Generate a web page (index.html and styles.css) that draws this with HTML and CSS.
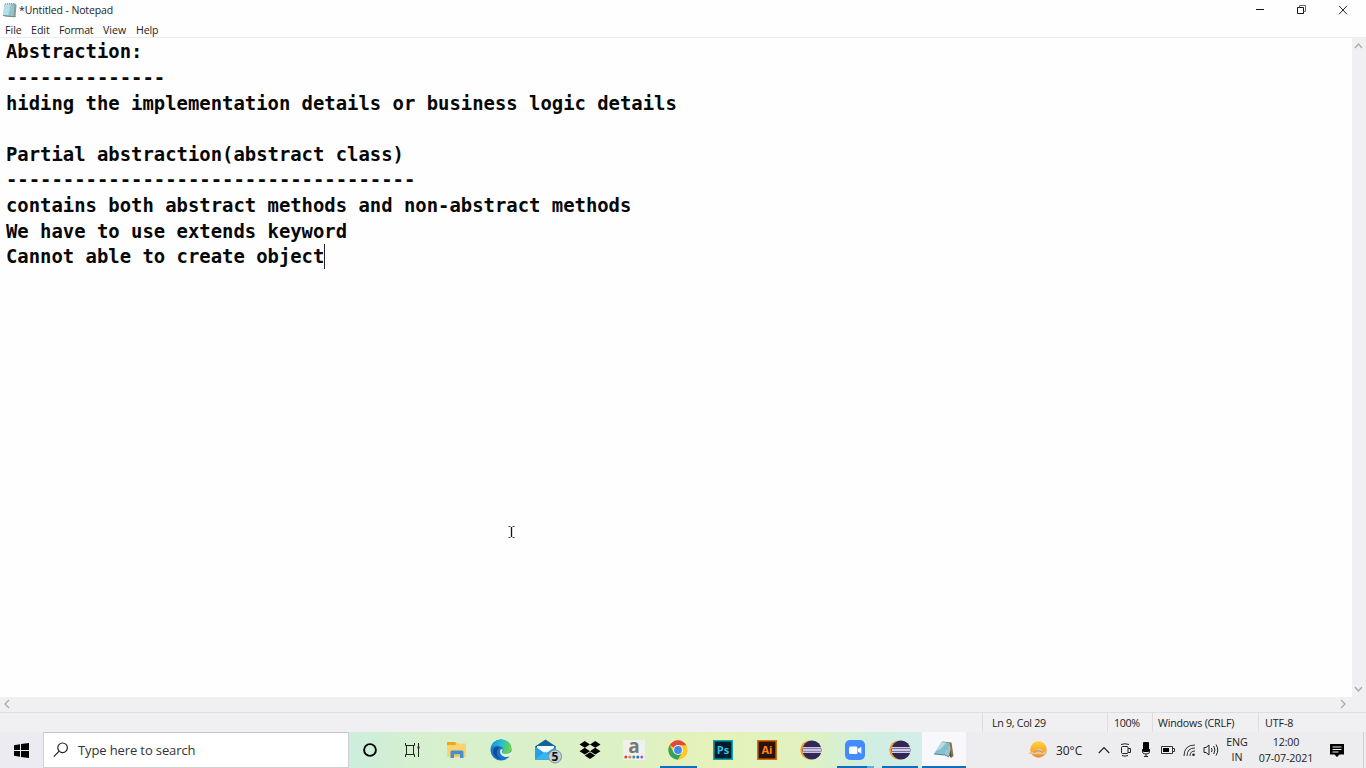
FILE: index.html
```html
<!DOCTYPE html>
<html lang="en">
<head>
<meta charset="utf-8">
<title>*Untitled - Notepad</title>
<link rel="stylesheet" href="styles.css">
</head>
<body>
<div class="screen">
  <header class="titlebar">
    <svg class="app-icon" width="16" height="16" viewBox="0 0 16 16"><path d="M3 2 13 1.500 14.500 3 13.500 15 3 14.500z" fill="#8a9a93"/><path d="M2.500 2 12.500 2 11.500 14.500 1 13.500z" fill="#8fc5d2"/><path d="M3 2 9 2 6 13.500 1 13.300z" fill="#b5dee8"/><path d="M3 1.800 13 1.800" stroke="#64858d" stroke-dasharray="1 1"/><path d="M1 13.500 11.500 14.700 13.500 14.500" stroke="#718a87" fill="none"/></svg>
    <span class="title">*Untitled - Notepad</span>
    <div class="controls">
      <svg width="42" height="20" viewBox="0 0 42 20"><path d="M16 9.500h8" stroke="#111"/></svg>
      <svg width="42" height="20" viewBox="0 0 42 20" fill="none" stroke="#111"><path d="M15.500 7.500h6v6h-6z"/><path d="M17.500 7.500v-2h6v6h-2" stroke="#666"/></svg>
      <svg width="42" height="20" viewBox="0 0 42 20"><path d="m15 5.800 8 8.500m0-8.500-8 8.500" stroke="#222" fill="none"/></svg>
    </div>
  </header>
  <nav class="menu"><span class="m-file">File</span><span class="m-edit">Edit</span><span class="m-format">Format</span><span class="m-view">View</span><span class="m-help">Help</span></nav>
  <main class="editor">
<pre class="document">Abstraction:
--------------
hiding the implementation details or business logic details

Partial abstraction(abstract class)
------------------------------------
contains both abstract methods and non-abstract methods
We have to use extends keyword
Cannot able to create object<i class="caret"></i></pre>
    <div class="vscroll">
      <svg width="14" height="14" viewBox="0 0 14 14"><path d="m3 10 3.500-4 3.500 4"/></svg>
      <svg width="14" height="14" viewBox="0 0 14 14"><path d="m3 4 3.500 4 3.500-4"/></svg>
    </div>
    <svg class="pointer" width="9" height="14" viewBox="0 0 9 14" fill="none"><path d="M1.500 1.500h2m2 0h2m-6 11h2m2 0h2" stroke="#444"/><path d="M4.500 2v10" stroke="#111" stroke-width="1.300"/></svg>
  </main>
  <div class="hscroll">
    <svg width="14" height="14" viewBox="0 0 14 14"><path d="M9 3 5 7l4 4"/></svg>
    <svg width="14" height="14" viewBox="0 0 14 14"><path d="m4 3 4 4-4 4"/></svg>
  </div>
  <footer class="status"><span></span><span class="pos">Ln 9, Col 29</span><span class="pct">100%</span><span class="eol">Windows (CRLF)</span><span class="enc">UTF-8</span></footer>

  <div class="taskbar">
    <div class="start"><svg width="16" height="15" viewBox="0 0 16 15"><path d="M0 2.200 6 1.300V7H0zM7 1.100 15 0v7H7zM0 8h6v5.700L0 12.800zM7 8h8v7l-8-1.100z" fill="#000"/></svg></div>
    <div class="search"><svg width="16" height="16" viewBox="0 0 16 16" fill="none" stroke="#222" stroke-width="1.200"><circle cx="9.600" cy="5.800" r="4.800"/><path d="m6.200 9.200-5.400 5.500"/></svg><span>Type here to search</span></div>
    <div class="apps">
      <div class="app"><svg width="16" height="16" viewBox="0 0 16 16"><circle cx="8" cy="8" r="5.900" fill="none" stroke="#000" stroke-width="1.900"/></svg></div>
      <div class="app"><svg width="18" height="16" viewBox="0 0 18 16" fill="none" stroke="#222"><path d="M1.500 1v2.500h9V1M1.500 15v-2.500h9V15M2.500 3.500v9M9.500 3.500v9M14.500 1v14"/><path d="M13.500 4.500h2v2h-2z" fill="#222" stroke="none"/></svg></div>
      <div class="app"><svg width="20" height="18" viewBox="0 0 20 18"><path d="M0 1h8l2 2h8q1 0 1 1v12H0z" fill="#e8a91e"/><path d="M0 4h8l2-1.500h9V16H0z" fill="#ffd36c"/><path d="M3.500 17v-6q0-1.500 1.500-1.500h10q1.500 0 1.500 1.500v6H13v-3.500H7V17z" fill="#4290cf"/><path d="M7 13.500h6V16H7z" fill="#f7c954"/></svg></div>
      <div class="app"><svg width="22" height="22" viewBox="0 0 22 22"><defs><linearGradient id="edge" x1="0" y1="0" x2="1" y2=".3"><stop stop-color="#168ddb"/><stop offset=".55" stop-color="#25bfd0"/><stop offset="1" stop-color="#6bd34d"/></linearGradient></defs><circle cx="11" cy="11" r="10.500" fill="#1675c9"/><path d="M.6 10C1 4.500 5.300.5 11 .5c6 0 10.500 4 10.500 8.600 0 3.600-2.600 5.900-6 5.900-2.400 0-3.300-1-2.700-2 .8-1.300.8-3.300-.7-4.700C8.700 5.500 2.800 6.500.6 10z" fill="url(#edge)"/><path d="M9.500 8.800c-4.500 3-3 9.800 2.500 11.800-5.800-.2-9.300-4.800-8.700-9 .5-3.300 3.600-4.600 6.200-2.800z" fill="#17499b"/><path d="M12.800 10.500c.2 1.100-.8 1.600-.7 2.700.2 1.500 2.900 2.100 5.300 1.500 1.500-.4 3-1.200 4.100-2.200l1.500 1-3 3.500c-3.500 2.300-9.300.4-9.900-3.800-.3-2.200 1-4.400 2.700-2.700z" fill="#e6f3da"/></svg></div>
      <div class="app"><svg width="32" height="28" viewBox="0 0 32 28"><path d="m5 10.500 10.500-7L26 10.500v13H5z" fill="#14629c"/><path d="M7 10h17v8H7z" fill="#f5faff"/><path d="m5 10.500 10.500 7 10.500-7v13H5z" fill="#289fe4"/><path d="m5 23.500 10.500-8 7 8z" fill="#36b5f0"/><circle cx="25" cy="20.500" r="6.500" fill="#c2d2d5" stroke="#7c9297"/><text class="badge" x="25" y="24.800" text-anchor="middle">5</text></svg></div>
      <div class="app"><svg width="22" height="20" viewBox="0 0 22 20"><path d="m5.800 1 5.200 3.400-5.200 3.400L.5 4.400zm10.400 0 5.300 3.400-5.300 3.400L11 4.400zM5.800 7.800l5.200 3.400-5.200 3.300-5.300-3.300zm10.400 0 5.300 3.400-5.300 3.300-5.200-3.300zM5.800 15.600l5.200-3.300 5.200 3.300L11 19z"/></svg></div>
      <div class="app"><svg class="shop" width="22" height="22" viewBox="0 0 22 22"><path d="M0 1h22v20H0z" fill="#eff1ed"/><text class="letter-a" x="11" y="14" text-anchor="middle">a</text><g><circle cx="2.800" cy="18" r="1.500" fill="#d6472d"/><circle cx="6.800" cy="18" r="1.500" fill="#ef7842"/><circle cx="10.800" cy="18" r="1.500" fill="#21a083"/><circle cx="14.800" cy="18" r="1.500" fill="#3c60d8"/><circle cx="18.800" cy="18" r="1.500" fill="#a554ca"/></g></svg></div>
      <div class="app run"><svg width="20" height="20" viewBox="0 0 20 20"><circle cx="10" cy="10" r="9.700" fill="#ffca28"/><path d="M10 10 1.600 5.200A9.700 9.700 0 0 1 18.400 5.200H10z" fill="#e5483b"/><path d="M1.600 5.200A9.700 9.700 0 0 0 9.800 19.700L14 12.500l-8.200-.1z" fill="#30a45b"/><circle cx="10" cy="10" r="4.900" fill="#f4f7ec"/><circle cx="10" cy="10" r="3.900" fill="#4388ef"/></svg></div>
      <div class="app"><svg width="20" height="20" viewBox="0 0 20 20"><path d="M.8.800h18.400v18.400H.8z" fill="#001d2b" stroke="#13a5b5" stroke-width="1.600"/><text class="adobe ps" x="10" y="13.500" text-anchor="middle">Ps</text></svg></div>
      <div class="app"><svg width="20" height="20" viewBox="0 0 20 20"><path d="M.8.800h18.400v18.400H.8z" fill="#2b1305" stroke="#d66b12" stroke-width="1.600"/><text class="adobe ai" x="10" y="13.500" text-anchor="middle">Ai</text></svg></div>
      <div class="app"><svg width="22" height="20" viewBox="0 0 22 20"><circle cx="9.800" cy="10" r="9.500" fill="#ee9939"/><circle cx="12" cy="10" r="9.500" fill="#302657"/><path d="M3 7h18v6H3z" fill="#c9c3dc"/><path d="M3 8.500h18m-18 3h18" stroke="#8d83b0"/></svg></div>
      <div class="app run zoom"><svg width="20" height="20" viewBox="0 0 20 20"><rect width="20" height="20" rx="5" fill="#438bff"/><rect x="4" y="6.500" width="8.500" height="7.500" rx="1.500" fill="#fff"/><path d="m13 9 3.300-2.300v7L13 11.500z" fill="#fff"/></svg></div>
      <div class="app run"><svg width="22" height="20" viewBox="0 0 22 20"><circle cx="9.800" cy="10" r="9.500" fill="#ee9939"/><circle cx="12" cy="10" r="9.500" fill="#302657"/><path d="M3 7h18v6H3z" fill="#d2cee2"/><path d="M3 8.500h18m-18 3h18" stroke="#7b719f"/></svg></div>
      <div class="app run active"><svg width="20" height="20" viewBox="0 0 20 20"><path d="M8 1.500 17.500 2.500 19.500 16 17 18z" fill="#8b704f"/><path d="m15 3.500 2.500 14-3-2z" fill="#444b3c"/><path d="M7.500 2 15.500 3 11 15 0 14z" fill="#83bfd0"/><path d="m7.500 2 5 .8-6 6.200-4.500 2z" fill="#b7dce5"/><path d="m15.500 3 1 6-1.500 8-4-2z" fill="#9bc4cc"/><path d="M0 14 11 15l4 2" stroke="#578896" fill="none"/></svg></div>
    </div>
    <div class="tray">
      <svg class="weather" width="20" height="20" viewBox="0 0 20 20"><defs><linearGradient id="sun" x2="0" y2="1"><stop stop-color="#ffd43b"/><stop offset="1" stop-color="#f38b28"/></linearGradient></defs><circle cx="10.500" cy="9.500" r="8.300" fill="url(#sun)"/><path d="M1 14q-1-1 1-1.500l5-.5q1-3 4-3 3 0 4 3l3 .5q2 .8 0 1.800z" fill="#e7c79c"/><path d="m6 12.500 4-2 5 2" stroke="#b68e69" fill="none"/></svg>
      <span class="temp">30°C</span>
      <svg class="chev" width="12" height="8" viewBox="0 0 12 8"><path d="m.8 7 5.200-5.500L11.200 7" fill="none" stroke="#222" stroke-width="1.100"/></svg>
      <svg class="meet" width="12" height="14" viewBox="0 0 12 14" fill="none" stroke="#222"><rect x="1.500" y="3.500" width="6.500" height="7" rx="1"/><path d="M8 5.500h2.500v4H8M1 1.500q4-1.500 8 0M2 12.500q3 1.300 6 0"/></svg>
      <svg class="mic" width="10" height="16" viewBox="0 0 10 16"><rect x="2" y="0" width="6" height="10" rx="1" fill="#000"/><path d="M1.500 7v3q0 2 3.500 2t3.500-2V7M5 12v3M3 14.500h4" fill="none" stroke="#222"/></svg>
      <svg class="battery" width="14" height="10" viewBox="0 0 14 10"><path d="M.5 1.500h11v7H.5zM12 3.500h1.500v3H12" fill="none" stroke="#333"/><path d="M2 3h6v4H2z"/></svg>
      <svg class="wifi" width="13" height="13" viewBox="0 0 13 13" fill="none" stroke="#333"><path d="M1 12Q1 1 12 1M4 12q0-8 8-8M7 12q0-5 5-5"/><circle cx="10.500" cy="10.700" r="1.300" fill="#222" stroke="none"/></svg>
      <svg class="sound" width="16" height="14" viewBox="0 0 16 14" fill="none" stroke="#222"><path d="M1 4.500h2L6 2v10L3 9.500H1zM8.500 5q1.200 2 0 4M10.700 3q2.500 4 0 8M13 1.500q3.500 5.500 0 11"/></svg>
      <div class="lang"><span>ENG</span><span>IN</span></div>
      <div class="clock"><span>12:00</span><span>07-07-2021</span></div>
      <svg class="notice" width="15" height="15" viewBox="0 0 15 15"><path d="M0 1h14v10.500H9.500L7 14l-2.500-2.500H0z"/><path d="M2.500 4h9m-9 2.500h9m-9 2.500h6" stroke="#eee"/></svg>
      <i class="desktop"></i>
    </div>
  </div>
</div>
</body>
</html>
```

FILE: styles.css
```css
* { box-sizing: border-box; }
body { margin: 0; background: #fff; color: #222; font-family: "Open Sans", "Noto Sans", sans-serif; }
svg { display: block; flex: none; }
.screen { width: 1366px; height: 768px; overflow: hidden; display: grid; grid-template-rows: 20px 17px 660px 15px 20px 36px; background: #fefefe; }
.titlebar { display: flex; align-items: center; padding-left: 2px; }
.title { font-size: 10.500px; margin-left: 1px; line-height: 20px; letter-spacing: -.12px; }
.controls { display: flex; margin-left: auto; }
.menu { display: flex; padding-left: 5px; font-size: 10.600px; line-height: 20px; }
.m-file { width: 26px; }
.m-edit { width: 28px; }
.m-format { width: 44px; letter-spacing: -.2px; }
.m-view { width: 33px; }
.m-help { letter-spacing: -.15px; }
.editor { display: flex; justify-content: space-between; border-top: 1px solid #ececef; position: relative; }
.document { margin: 0; padding: 1.300px 0 0 6px; font: bold 18.900px/25.620px "DejaVu Sans Mono", monospace; letter-spacing: -.003px; color: #080808; }
.caret { display: inline-block; width: 1px; height: 25px; background: #222; vertical-align: middle; margin: -4px 0 -2px -.6px; }
.vscroll { width: 14px; background: #f0eff2; display: flex; flex-direction: column; justify-content: space-between; }
.vscroll path, .hscroll path { stroke: #aaa; stroke-width: 1.300px; fill: none; }
.pointer { position: absolute; left: 507px; top: 487px; }
.hscroll { display: flex; justify-content: space-between; background: #f0eff2; padding-right: 15px; }
.status { display: grid; grid-template-columns: 982px 125px 45px 106px 108px; background: #f0eff1; border-top: 1px solid #dedee0; font-size: 10.700px; line-height: 20px; white-space: nowrap; }
.status span + span { border-left: 1px solid #dedee0; }
.status .pos { padding-left: 9px; letter-spacing: -.3px; }
.status .pct { padding-left: 6px; letter-spacing: -.4px; }
.eol { padding-left: 5px; letter-spacing: -.2px; }
.enc { padding-left: 6px; letter-spacing: -.1px; }
.taskbar { display: flex; background: #edecef; }
.start { width: 43px; padding: 11px 0 0 14px; background: #ebebf1; }
.search { width: 306px; height: 36px; border: 1px solid #cfd0d4; border-top-color: #c2c5cc; background: #fff; display: flex; align-items: center; padding-left: 9px; gap: 9px; font-size: 13px; color: #333; }
.search span { letter-spacing: -.12px; }
.apps { width: 617px; margin-right: 1px; display: grid; grid-template-columns: 42px 44px repeat(12, 1fr); background: linear-gradient(90deg, #cceedc, #d6efce 12%, #ddf1c5 45%, #e5f2b8 60%, #e1f2bf 73%, #d0eee1 85%, #d6edf0); }
.app { display: flex; justify-content: center; align-items: center; height: 36px; }
.run { border-bottom: 2px solid #136dbd; padding-top: 2px; margin: 0 4px; }
.zoom { border-width: 0 0 2px; border-image: linear-gradient(90deg, #136dbd 81%, #65a9d6 81%) 0 0 2 0; }
.active { margin: 0; background: #f8f8fc; }
.badge { font: bold 12px "Open Sans", sans-serif; fill: #111; }
.shop { overflow: visible; }
.letter-a { font: bold 19px "Open Sans", sans-serif; fill: #777; }
.adobe { font: bold 11px "Open Sans", sans-serif; }
.ps { fill: #38bdeb; }
.ai { fill: #ff861c; }
.tray { flex: 1; display: flex; align-items: center; padding-left: 61px; font-size: 12px; }
.temp { margin-left: 8px; width: 35px; letter-spacing: -.05px; white-space: nowrap; }
.chev { margin-left: 7px; }
.meet { margin-left: 10px; }
.mic { margin-left: 9px; }
.battery { margin-left: 10px; }
.wifi { margin-left: 8px; }
.sound { margin-left: 7px; }
.lang, .clock { display: flex; flex-direction: column; text-align: center; font-size: 10.700px; line-height: 15px; }
.lang { width: 24px; margin-left: 6px; letter-spacing: -.1px; }
.clock { width: 60px; margin-left: 7px; white-space: nowrap; letter-spacing: -.15px; line-height: 16px; }
.notice { margin-left: 14px; }
.desktop { height: 36px; margin-left: 18px; border-left: 1px solid #d0d0d5; }
```
